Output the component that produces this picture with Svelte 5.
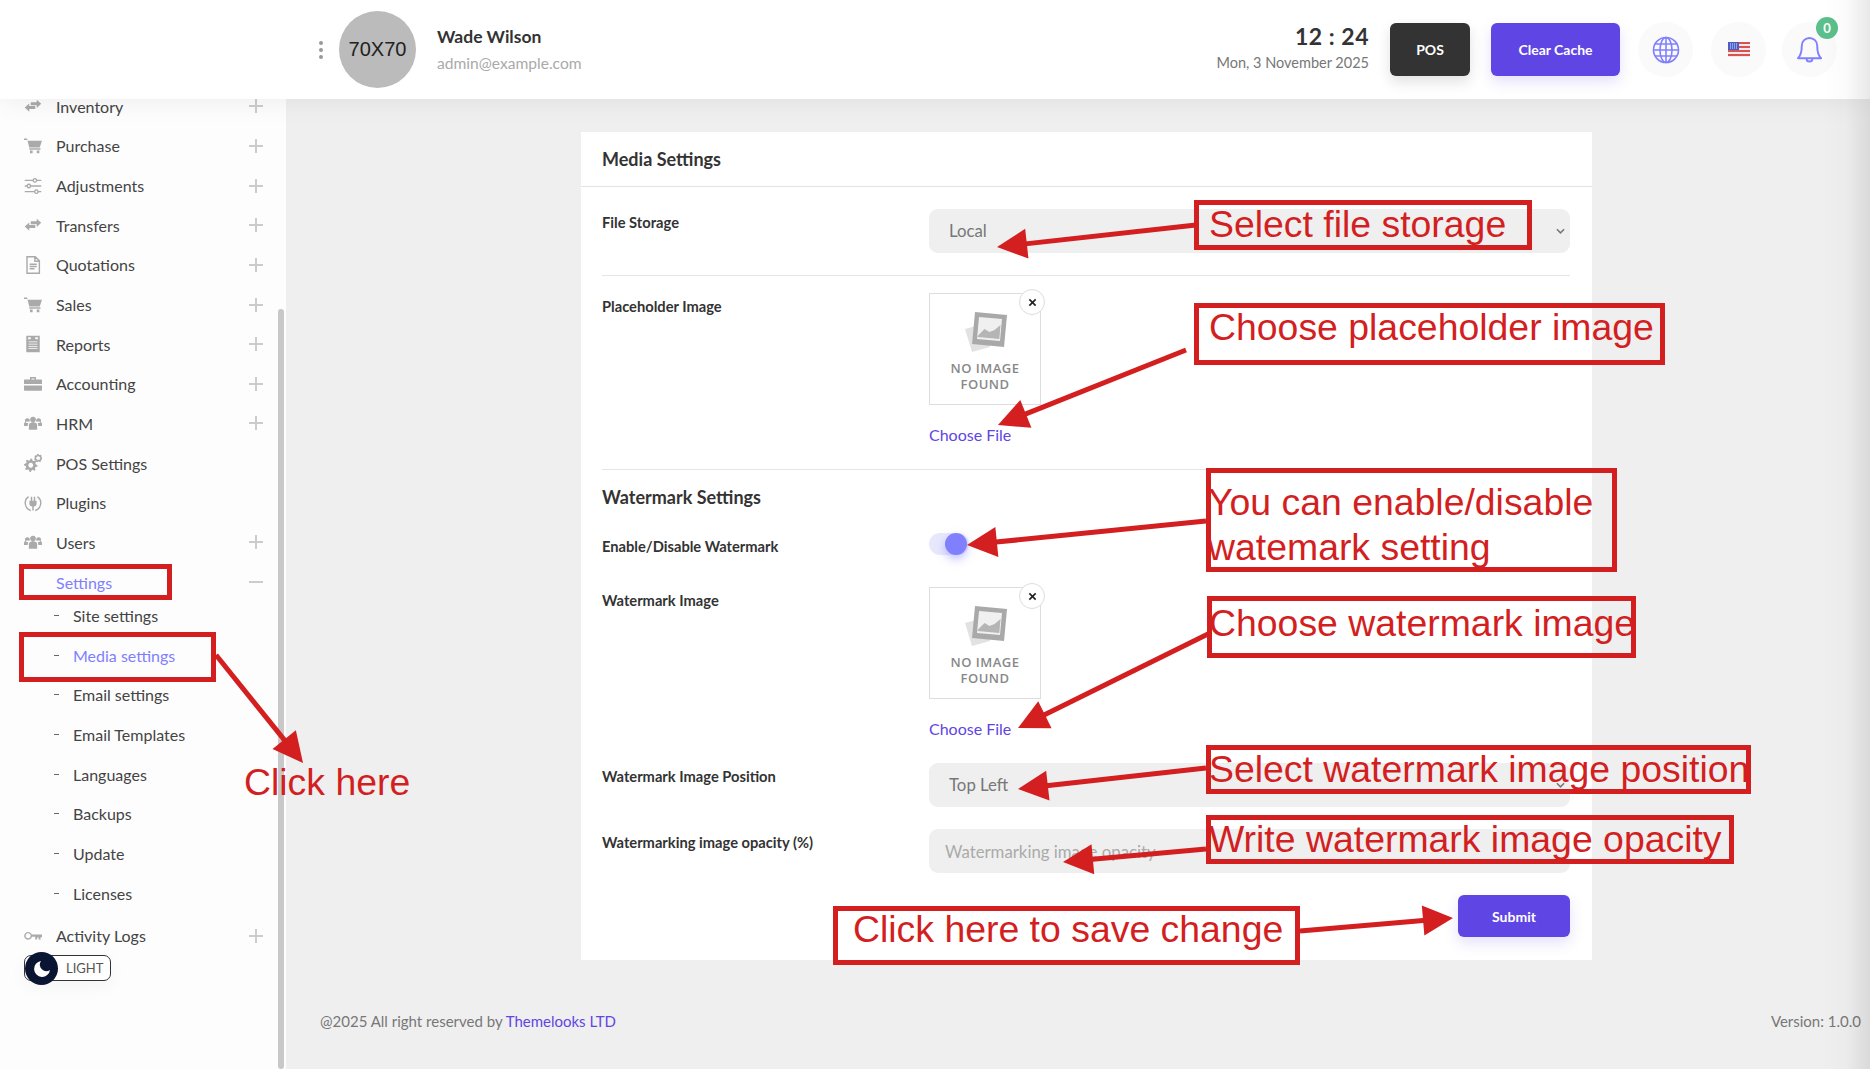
<script>
	// Media settings page with the red tutorial annotations drawn on top.
	const items = [
		{ label: 'Inventory', icon: 'swap', plus: true },
		{ label: 'Purchase', icon: 'cart', plus: true },
		{ label: 'Adjustments', icon: 'sliders', plus: true },
		{ label: 'Transfers', icon: 'swap', plus: true },
		{ label: 'Quotations', icon: 'file', plus: true },
		{ label: 'Sales', icon: 'cart', plus: true },
		{ label: 'Reports', icon: 'report', plus: true },
		{ label: 'Accounting', icon: 'case', plus: true },
		{ label: 'HRM', icon: 'users', plus: true },
		{ label: 'POS Settings', icon: 'gears', plus: false },
		{ label: 'Plugins', icon: 'plug', plus: false },
		{ label: 'Users', icon: 'users', plus: true }
	];
	const subs = ['Site settings', 'Media settings', 'Email settings', 'Email Templates', 'Languages', 'Backups', 'Update', 'Licenses'];

	function gear(cx, cy, r, teeth) {
		let d = '';
		const n = teeth * 4;
		for (let i = 0; i < n; i++) {
			const a = (i / n) * Math.PI * 2;
			const rr = i % 4 < 2 ? r : r * 0.74;
			d += `${i ? 'L' : 'M'}${(cx + rr * Math.cos(a)).toFixed(2)} ${(cy + rr * Math.sin(a)).toFixed(2)}`;
		}
		return d + 'Z';
	}

	const icons = {
		swap: { fill: 'M9 7h8V3.500L23 9l-6 5.500V11H9zM15 12H7V8.500L1 14l6 5.500V16h8z' },
		cart: { fill: 'M0 2h4l1 3h19l-3 9H7L4.500 4H0zM7 15h15v2H7zM8 18h3.500v3.500H8zM17 18h3.500v3.500H17z' },
		sliders: { stroke: 'M1 4.500h11M17 4.500h6M1 12h3M9 12h14M1 19.500h13M19 19.500h4M14.500 2.200a2.300 2.300 0 1 0 .01 0zM6.500 9.700a2.300 2.300 0 1 0 .01 0zM16.500 17.200a2.300 2.300 0 1 0 .01 0z' },
		file: { stroke: 'M4 1h11l5.500 5.500V23H4zM14.500 1v6h6M7.500 11h9.500M7.500 14h9.500M7.500 17h6.500' },
		report: { fill: 'M3 1h18v22H3zM5.500 3v2.500h3.500V3zM15 3v2.500h3.500V3z', light: 'M6 8.500h12v1.200H6zM6 11.500h12v1.200H6zM6 14.500h12v1.200H6zM6 17.500h12v1.200H6z' },
		case: { fill: 'M8 6V2.500h8V6h7a1 1 0 0 1 1 1v5H0V7a1 1 0 0 1 1-1zM10 4.500V6h4V4.500zM0 14h24v6a1 1 0 0 1-1 1H1a1 1 0 0 1-1-1z' },
		users: { fill: 'M12 3.500a3.800 3.800 0 1 1-.01 0zM4.500 5.500a3.200 3.200 0 1 1-.01 0zM19.500 5.500a3.200 3.200 0 1 1-.01 0zM6.500 15c0-3 2.500-4 5.500-4s5.500 1 5.500 4v6h-11zM0 13c0-2 2.500-3 4.500-3 1 0 1.800.2 2.500.5-1.500 1-2 2.800-2 5.500H0zM24 13c0-2-2.500-3-4.500-3-1 0-1.800.2-2.500.5 1.500 1 2 2.800 2 5.500h5z' },
		gears: { fill: gear(9, 15, 9, 8) + 'M9 11.800a3.200 3.200 0 1 0 .01 0z', stroke: gear(19, 5.500, 4.500, 7) },
		plug: { fill: 'M9 3.500h2V9h2V3.500h2V9h1.800v3.500a4.300 4.300 0 0 1-3.800 4.300V22h-2v-5.200a4.300 4.300 0 0 1-3.800-4.300V9H9z', stroke: 'M6 3.500a10.500 10.500 0 0 0 3 18.500M18 3.500a10.500 10.500 0 0 1-3 18.500' },
		key: { fill: 'M9.500 10h14.500v3.500h-2v3h-2.500v-2.500h-2v2.500H15v-3.500H9.500z', stroke: 'M5.500 7.500a4.300 4.300 0 1 0 .01 0z' }
	};

	// [fromX, fromY, tipX, tipY] in page pixels
	const arrows = [
		[1196, 225, 997, 247],
		[1186, 350, 998, 425],
		[1206, 521, 967, 545],
		[1208, 634, 1018, 728],
		[1206, 768, 1018, 789],
		[1206, 849, 1063, 862],
		[1300, 931, 1453, 918],
		[216, 655, 303, 763]
	];

	function head(a) {
		const [x1, y1, x2, y2] = a;
		const len = Math.hypot(x2 - x1, y2 - y1);
		const ux = (x2 - x1) / len;
		const uy = (y2 - y1) / len;
		const bx = x2 - ux * 30;
		const by = y2 - uy * 30;
		return `${x2},${y2} ${bx - uy * 15},${by + ux * 15} ${bx + uy * 15},${by - ux * 15}`;
	}

	function shaft(a) {
		const [x1, y1, x2, y2] = a;
		const len = Math.hypot(x2 - x1, y2 - y1);
		return { x1, y1, x2: x2 - ((x2 - x1) / len) * 24, y2: y2 - ((y2 - y1) / len) * 24 };
	}

	const notes = [
		{ cls: 'n1', text: 'Select file storage' },
		{ cls: 'n2', text: 'Choose placeholder image' },
		{ cls: 'n3', text: 'You can enable/disable watemark setting' },
		{ cls: 'n4', text: 'Choose watermark image' },
		{ cls: 'n5', text: 'Select watermark image position' },
		{ cls: 'n6', text: 'Write watermark image opacity' },
		{ cls: 'n7', text: 'Click here to save change' }
	];
</script>

{#snippet navicon(name)}
	<svg class="nicon" viewBox="0 0 24 24" aria-hidden="true">
		{#if icons[name].fill}<path d={icons[name].fill} fill="#aaa" fill-rule="evenodd" />{/if}
		{#if icons[name].light}<path d={icons[name].light} fill="#fff" />{/if}
		{#if icons[name].stroke}<path d={icons[name].stroke} fill="none" stroke="#aaa" stroke-width="1.900" />{/if}
	</svg>
{/snippet}

{#snippet noimage()}
	<div class="thumb">
		<button class="close" aria-label="Remove">
			<svg viewBox="0 0 10 10"><path d="M1.500 1.500l7 7M8.500 1.500l-7 7" stroke="#222" stroke-width="1.800" /></svg>
		</button>
		<svg class="ph" viewBox="0 0 44 42" aria-hidden="true">
			<path d="M2 18l18-5 7 23-18 5z" fill="#e2e2e2" />
			<path d="M12 1l32 3-3 32-32-3z" fill="#a9a9a9" />
			<path d="M16 6l23 2-2 22-23-2z" fill="#f0f0f0" />
			<path d="M15.500 24l6-6 5 3 5-2 6-5-1.200 14-22-2z" fill="#b5b5b5" />
		</svg>
		<div class="ph-text">NO IMAGE<br />FOUND</div>
	</div>
{/snippet}

<div class="page">
	<header class="top">
		<div class="kebab"><i></i><i></i><i></i></div>
		<div class="avatar">70X70</div>
		<div class="who">
			<div class="name">Wade Wilson</div>
			<div class="mail">admin@example.com</div>
		</div>
		<div class="clock">
			<div class="time">12 : 24</div>
			<div class="date">Mon, 3 November 2025</div>
		</div>
		<button class="tbtn pos">POS</button>
		<button class="tbtn cache">Clear Cache</button>
		<div class="round">
			<svg width="28" height="28" viewBox="0 0 28 28" fill="none" stroke="#8080ff" stroke-width="1.600">
				<circle cx="14" cy="14" r="12.500" />
				<ellipse cx="14" cy="14" rx="6" ry="12.500" />
				<path d="M14 1.500v25M3 8h22M1.500 14h25M3 20h22" />
			</svg>
		</div>
		<div class="round">
			<svg width="22" height="15" viewBox="0 0 22 15">
				<rect width="22" height="15" fill="#e8e8ee" />
				<path d="M0 1h22M0 5h22M0 9h22M0 13h22" stroke="#d9524f" stroke-width="2" />
				<rect width="11" height="8" fill="#4a5fc4" />
				<path d="M2 2h7M2 4h7M2 6h7" stroke="#dfe3f5" stroke-dasharray="1 1" />
			</svg>
		</div>
		<div class="round bell">
			<svg width="27" height="27" viewBox="0 0 28 28" fill="none" stroke="#8080ff" stroke-width="2" stroke-linejoin="round">
				<path d="M14 2a8 8 0 0 0-8 8c0 7-1 10-4 13h24c-3-3-4-6-4-13a8 8 0 0 0-8-8z" />
				<path d="M11 23.500a3 3 0 0 0 6 0" />
			</svg>
			<span class="badge">0</span>
		</div>
	</header>

	<div class="body">
		<aside class="side">
			<nav>
				{#each items as it}
					<div class="item">
						{@render navicon(it.icon)}
						<span class="lbl">{it.label}</span>
						{#if it.plus}<span class="plus"></span>{/if}
					</div>
				{/each}
				<div class="item active">
					<span class="nicon"></span>
					<span class="lbl">Settings</span>
					<span class="plus minus"></span>
				</div>
				<ul class="subs">
					{#each subs as s, i}
						<li class:active={i === 1}><span class="dash"></span>{s}</li>
					{/each}
				</ul>
				<div class="item last">
					{@render navicon('key')}
					<span class="lbl">Activity Logs</span>
					<span class="plus"></span>
				</div>
			</nav>
			<div class="mode">
				<span class="moon">
					<svg width="20" height="20" viewBox="0 0 20 20"><path d="M9 2a8 8 0 1 0 9 9 6.500 6.500 0 0 1-9-9z" fill="#fff" /></svg>
				</span>
				<span class="mode-text">LIGHT</span>
			</div>
			<div class="sbar"></div>
		</aside>

		<main class="main">
			<section class="card">
				<h2 class="card-title">Media Settings</h2>
				<div class="form">
					<div class="row first">
						<label for="fs">File Storage</label>
						<div class="sel">
							<select id="fs"><option>Local</option></select>
							<svg class="chev" viewBox="0 0 10 6"><path d="M1 1l4 4 4-4" fill="none" stroke="#777" stroke-width="1.700" /></svg>
						</div>
					</div>
					<div class="row second">
						<label for="ph">Placeholder Image</label>
						<div>
							{@render noimage()}
							<a id="ph" class="choose" href="#top">Choose File</a>
						</div>
					</div>
					<h3 class="sub-title">Watermark Settings</h3>
					<div class="row">
						<label for="wm">Enable/Disable Watermark</label>
						<div id="wm" class="toggle"><span></span></div>
					</div>
					<div class="row gap31">
						<label for="wi">Watermark Image</label>
						<div>
							{@render noimage()}
							<a id="wi" class="choose" href="#top">Choose File</a>
						</div>
					</div>
					<div class="row gap24">
						<label for="wp">Watermark Image Position</label>
						<div class="sel">
							<select id="wp"><option>Top Left</option></select>
							<svg class="chev" viewBox="0 0 10 6"><path d="M1 1l4 4 4-4" fill="none" stroke="#777" stroke-width="1.700" /></svg>
						</div>
					</div>
					<div class="row gap22">
						<label for="wo">Watermarking image opacity (%)</label>
						<input id="wo" placeholder="Watermarking image opacity" />
					</div>
					<div class="actions"><button class="submit">Submit</button></div>
				</div>
			</section>
			<footer class="foot">
				<span>@2025 All right reserved by <a href="#top">Themelooks LTD</a></span>
				<span>Version: 1.0.0</span>
			</footer>
		</main>
	</div>
</div>

<div class="edge"></div>

<!-- tutorial annotations -->
<svg class="arrows" viewBox="0 0 1870 1071" width="1870" height="1071">
	{#each arrows as a}
		{@const s = shaft(a)}
		<line x1={s.x1} y1={s.y1} x2={s.x2} y2={s.y2} stroke="#d31f1f" stroke-width="5" />
		<polygon points={head(a)} fill="#d31f1f" />
	{/each}
</svg>
<div class="mark m1"></div>
<div class="mark m2"></div>
<div class="note n0">Click here</div>
{#each notes as n}
	<div class="note boxed {n.cls}">{n.text}</div>
{/each}

<style>
	:global(body) { margin: 0; background: #fff; overflow: hidden; font-family: Lato, "Noto Sans", sans-serif; color: #333; }
	.page { width: 1870px; height: 1069px; display: flex; flex-direction: column; overflow: hidden; }

	.top { height: 99px; flex: none; display: flex; align-items: center; background: #fff; position: relative; z-index: 2; box-shadow: 0 4px 24px rgba(0, 0, 0, 0.06); padding-left: 318px; box-sizing: border-box; }
	.kebab { width: 6px; display: flex; flex-direction: column; gap: 3px; align-items: center; }
	.kebab i { width: 4px; height: 4px; border-radius: 50%; background: #999; }
	.avatar { width: 77px; height: 77px; margin-left: 15px; border-radius: 50%; background: #bbb; display: flex; align-items: center; justify-content: center; font: 20px "Liberation Sans", sans-serif; color: #222; }
	.who { margin-left: 21px; }
	.name { font-size: 17.500px; font-weight: 700; line-height: 20px; color: #333; }
	.mail { font-size: 15.600px; line-height: 20px; margin-top: 6px; color: #aaa; }
	.clock { margin-left: auto; text-align: right; }
	.time { font-size: 23px; font-weight: 700; line-height: 20px; letter-spacing: 0.5px; color: #333; }
	.date { font-size: 14.500px; line-height: 20px; margin-top: 7px; color: #777; }
	.tbtn { height: 53px; border: 0; border-radius: 6px; color: #fff; font: 700 14px Lato, sans-serif; flex: none; }
	.pos { width: 80px; margin-left: 21px; background: #333; box-shadow: 0 6px 14px rgba(0, 0, 0, 0.12); }
	.cache { width: 129px; margin-left: 21px; background: #5f45e3; box-shadow: 0 6px 14px rgba(95, 69, 227, 0.16); }
	.round { width: 55px; height: 55px; flex: none; border-radius: 50%; background: #fafafa; margin-left: 18px; display: flex; align-items: center; justify-content: center; position: relative; }
	.round.bell { margin-left: 16px; margin-right: 33px; }
	.badge { position: absolute; right: -1px; top: -5px; width: 22px; height: 22px; border-radius: 50%; background: #5abf8a; color: #fff; font-size: 13px; font-weight: 700; display: flex; align-items: center; justify-content: center; }

	.body { flex: 1; display: flex; min-height: 0; }
	.side { width: 286px; flex: none; background: #fdfdfd; position: relative; overflow: hidden; }
	nav { padding-left: 24px; margin-top: -12.500px; }
	.item { height: 39.650px; display: flex; align-items: center; font-size: 16px; color: #444; position: relative; }
	.nicon { width: 18px; height: 18px; flex: none; display: block; }
	.lbl { margin-left: 14px; }
	.plus { position: absolute; left: 225px; top: 50%; width: 14px; height: 14px; margin-top: -7px; background: linear-gradient(#ccc, #ccc) center / 14px 2px no-repeat, linear-gradient(#ccc, #ccc) center / 2px 14px no-repeat; }
	.plus.minus { background: linear-gradient(#ccc, #ccc) center / 14px 2px no-repeat; }
	.item.active { color: #8080ff; }
	.subs { list-style: none; margin: -6px 0 0; padding: 0 0 0 30px; }
	.subs li { height: 39.650px; display: flex; align-items: center; font-size: 16px; color: #444; }
	.subs li.active { color: #8080ff; }
	.dash { width: 5px; height: 1px; background: #666; margin-right: 14px; }
	.item.last { margin-top: 3px; }
	.mode { position: absolute; left: 24px; top: 856px; width: 87px; height: 26px; box-sizing: border-box; border: 1px solid #333; border-radius: 7px; background: #fff; box-shadow: 0 6px 18px rgba(0, 0, 0, 0.04); display: flex; align-items: center; }
	.moon { position: absolute; left: 0; top: -4px; width: 33px; height: 33px; border-radius: 50%; background: #0a1433; display: flex; align-items: center; justify-content: center; }
	.mode-text { margin-left: 41px; font-size: 13px; color: #555; }
	.sbar { position: absolute; left: 278px; top: 210px; bottom: 0; width: 6px; border-radius: 3px; background: #c8c8c8; }

	.main { flex: 1; background: #efefef; position: relative; min-width: 0; }
	.card { margin: 33px 0 0 295px; width: 1011px; height: 828px; background: #fff; box-sizing: border-box; }
	.card-title { margin: 0; height: 55px; box-sizing: border-box; line-height: 54px; padding-left: 21px; font-size: 18px; font-weight: 700; border-bottom: 1px solid #e3e3e3; color: #333; }
	.form { padding: 0 22px 0 21px; }
	.row { display: grid; grid-template-columns: 327px 1fr; }
	.row label { font-size: 14.700px; font-weight: 700; line-height: 20px; margin-top: 3px; color: #333; }
	.row.first { padding: 22px 0; border-bottom: 1px solid #e5e5e5; }
	.row.second { padding: 17px 0 24px; border-bottom: 1px solid #e5e5e5; }
	.gap31 { margin-top: 31px; }
	.gap24 { margin-top: 24px; }
	.gap22 { margin-top: 22px; }
	.sub-title { margin: 15px 0 24px; font-size: 18px; line-height: 24px; font-weight: 700; color: #333; }
	.sel { position: relative; height: 44px; }
	select, input { width: 100%; height: 44px; box-sizing: border-box; border: 0; border-radius: 9px; background: #efefef; font: 16.800px Lato, sans-serif; color: #777; padding: 0 20px 1px; appearance: none; outline: 0; display: block; }
	input { padding: 0 16px; }
	input::placeholder { color: #aaa; opacity: 1; }
	.chev { position: absolute; right: 5px; top: 19px; width: 9px; height: 6px; }
	.thumb { width: 112px; height: 112px; box-sizing: border-box; border: 1px solid #ddd; background: #fff; position: relative; display: flex; flex-direction: column; align-items: center; }
	.close { position: absolute; right: -5px; top: -5px; width: 26px; height: 26px; padding: 7.500px; border-radius: 50%; background: #fff; border: 1px solid #ddd; box-sizing: border-box; display: block; }
	.close svg { display: block; width: 9px; height: 9px; }
	.ph { width: 44px; height: 42px; margin-top: 17px; }
	.ph-text { font: 600 13px/15.500px "Open Sans", sans-serif; letter-spacing: 0.5px; color: #888; text-align: center; margin-top: 8px; }
	.choose { display: block; margin-top: 20px; font-size: 16px; line-height: 20px; color: #5f45e3; text-decoration: none; }
	.toggle { width: 40px; height: 22px; border-radius: 11px; background: #e8e8fc; position: relative; }
	.toggle span { position: absolute; left: 16px; top: 0; width: 22px; height: 22px; border-radius: 50%; background: #8080ff; box-shadow: 0 4px 10px rgba(128, 128, 255, 0.5); }
	.actions { display: flex; justify-content: flex-end; margin-top: 22px; }
	.submit { width: 112px; height: 42px; border: 0; border-radius: 6px; background: #5f45e3; color: #fff; font: 700 14px Lato, sans-serif; box-shadow: 0 6px 14px rgba(95, 69, 227, 0.16); }
	.foot { position: absolute; left: 34px; right: 9px; top: 912px; display: flex; justify-content: space-between; font-size: 15px; line-height: 20px; color: #777; }
	.foot a { color: #5f45e3; text-decoration: none; }

	.edge { position: absolute; right: 0; top: 0; width: 48px; height: 1069px; background: linear-gradient(90deg, rgba(0, 0, 0, 0), rgba(0, 0, 0, 0.015) 50%, rgba(0, 0, 0, 0.09)); pointer-events: none; z-index: 3; }
	.arrows { position: absolute; left: 0; top: 0; pointer-events: none; z-index: 4; }
	.mark { position: absolute; box-sizing: border-box; border: 5px solid #d31f1f; z-index: 4; }
	.m1 { left: 19px; top: 564px; width: 153px; height: 36px; }
	.m2 { left: 19px; top: 632px; width: 197px; height: 50px; }
	.note { position: absolute; font: 37.400px/45px "Liberation Sans", sans-serif; color: #d31f1f; z-index: 5; box-sizing: border-box; white-space: nowrap; }
	.boxed { box-shadow: inset 0 0 0 5px #d31f1f; }
	.n0 { left: 244px; top: 760px; }
	.n1 { left: 1194px; top: 200px; width: 338px; height: 50px; padding-left: 15px; line-height: 49px; }
	.n2 { left: 1194px; top: 303px; width: 471px; height: 62px; padding-left: 15px; line-height: 48px; }
	.n3 { left: 1206px; top: 468px; width: 411px; height: 104px; padding: 12px 0 0 2px; white-space: normal; }
	.n4 { left: 1207px; top: 596px; width: 429px; height: 62px; padding-left: 2px; line-height: 54px; }
	.n5 { left: 1206px; top: 745px; width: 545px; height: 49px; padding-left: 3px; line-height: 48px; }
	.n6 { left: 1206px; top: 815px; width: 528px; height: 49px; padding-left: 3px; line-height: 48px; }
	.n7 { left: 833px; top: 906px; width: 467px; height: 59px; padding-left: 20px; line-height: 47px; }
</style>
